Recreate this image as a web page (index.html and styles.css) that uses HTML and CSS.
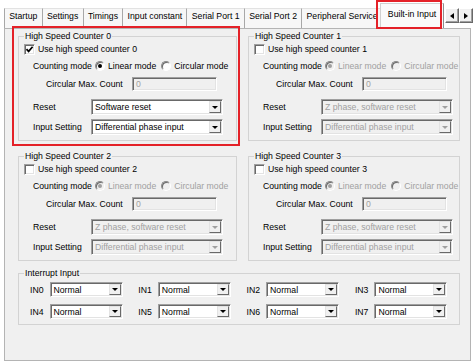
FILE: index.html
```html
<!DOCTYPE html>
<html>

<head>
	<meta charset="UTF-8">
	<title>Built-in Input</title>
	<link rel="stylesheet" href="styles.css">
</head>

<body>
	<div class="strip">
		<div class="tabs">
			<div class="tab">Startup</div>
			<div class="tab">Settings</div>
			<div class="tab">Timings</div>
			<div class="tab">Input constant</div>
			<div class="tab">Serial Port 1</div>
			<div class="tab">Serial Port 2</div>
			<div class="tab">Peripheral Service</div>
			<div class="tab active">Built-in Input</div>
			<div class="tab stub"></div>
		</div>
		<div class="spin">
			<span class="spinBtn"><i class="tri left"></i></span>
			<span class="spinBtn"><i class="tri right"></i></span>
		</div>
	</div>
	<div class="page">
		<div class="counters">
			<fieldset class="group">
				<legend>High Speed Counter 0</legend>
				<div class="row rowCheck">
					<span class="check"><svg width="9" height="9" viewBox="0 0 9 9"><path d="M1.5 4.2 L3.6 6.4 L7.6 1.8" fill="none" stroke="#000" stroke-width="1.7"/></svg></span>
					<span class="checkText">Use high speed counter 0</span>
				</div>
				<div class="row rowMode">
					<span class="modeLabel">Counting mode</span>
					<span class="radio on"></span><span class="radioText">Linear mode</span>
					<span class="radio second"></span><span class="radioText">Circular mode</span>
				</div>
				<div class="row rowMax">
					<span class="maxLabel">Circular Max. Count</span>
					<span class="textbox">0</span>
				</div>
				<div class="row rowCombo rowReset">
					<span class="comboLabel">Reset</span>
					<span class="combo"><span class="comboText">Software reset</span><span class="comboBtn"><i class="tri down"></i></span></span>
				</div>
				<div class="row rowCombo rowInput">
					<span class="comboLabel">Input Setting</span>
					<span class="combo"><span class="comboText">Differential phase input</span><span class="comboBtn"><i class="tri down"></i></span></span>
				</div>
			</fieldset>

			<fieldset class="group off">
				<legend>High Speed Counter 1</legend>
				<div class="row rowCheck">
					<span class="check"></span>
					<span class="checkText">Use high speed counter 1</span>
				</div>
				<div class="row rowMode">
					<span class="modeLabel">Counting mode</span>
					<span class="radio on"></span><span class="radioText">Linear mode</span>
					<span class="radio second"></span><span class="radioText">Circular mode</span>
				</div>
				<div class="row rowMax">
					<span class="maxLabel">Circular Max. Count</span>
					<span class="textbox">0</span>
				</div>
				<div class="row rowCombo rowReset">
					<span class="comboLabel">Reset</span>
					<span class="combo"><span class="comboText">Z phase, software reset</span><span class="comboBtn"><i class="tri down"></i></span></span>
				</div>
				<div class="row rowCombo rowInput">
					<span class="comboLabel">Input Setting</span>
					<span class="combo"><span class="comboText">Differential phase input</span><span class="comboBtn"><i class="tri down"></i></span></span>
				</div>
			</fieldset>

			<fieldset class="group off">
				<legend>High Speed Counter 2</legend>
				<div class="row rowCheck">
					<span class="check"></span>
					<span class="checkText">Use high speed counter 2</span>
				</div>
				<div class="row rowMode">
					<span class="modeLabel">Counting mode</span>
					<span class="radio on"></span><span class="radioText">Linear mode</span>
					<span class="radio second"></span><span class="radioText">Circular mode</span>
				</div>
				<div class="row rowMax">
					<span class="maxLabel">Circular Max. Count</span>
					<span class="textbox">0</span>
				</div>
				<div class="row rowCombo rowReset">
					<span class="comboLabel">Reset</span>
					<span class="combo"><span class="comboText">Z phase, software reset</span><span class="comboBtn"><i class="tri down"></i></span></span>
				</div>
				<div class="row rowCombo rowInput">
					<span class="comboLabel">Input Setting</span>
					<span class="combo"><span class="comboText">Differential phase input</span><span class="comboBtn"><i class="tri down"></i></span></span>
				</div>
			</fieldset>

			<fieldset class="group off">
				<legend>High Speed Counter 3</legend>
				<div class="row rowCheck">
					<span class="check"></span>
					<span class="checkText">Use high speed counter 3</span>
				</div>
				<div class="row rowMode">
					<span class="modeLabel">Counting mode</span>
					<span class="radio on"></span><span class="radioText">Linear mode</span>
					<span class="radio second"></span><span class="radioText">Circular mode</span>
				</div>
				<div class="row rowMax">
					<span class="maxLabel">Circular Max. Count</span>
					<span class="textbox">0</span>
				</div>
				<div class="row rowCombo rowReset">
					<span class="comboLabel">Reset</span>
					<span class="combo"><span class="comboText">Z phase, software reset</span><span class="comboBtn"><i class="tri down"></i></span></span>
				</div>
				<div class="row rowCombo rowInput">
					<span class="comboLabel">Input Setting</span>
					<span class="combo"><span class="comboText">Differential phase input</span><span class="comboBtn"><i class="tri down"></i></span></span>
				</div>
			</fieldset>
		</div>

		<fieldset class="group interrupt">
			<legend>Interrupt Input</legend>
			<div class="inGrid">
				<div class="inCell"><span class="inLabel">IN0</span><span class="combo small"><span class="comboText">Normal</span><span class="comboBtn"><i class="tri down"></i></span></span></div>
				<div class="inCell"><span class="inLabel">IN1</span><span class="combo small"><span class="comboText">Normal</span><span class="comboBtn"><i class="tri down"></i></span></span></div>
				<div class="inCell"><span class="inLabel">IN2</span><span class="combo small"><span class="comboText">Normal</span><span class="comboBtn"><i class="tri down"></i></span></span></div>
				<div class="inCell"><span class="inLabel">IN3</span><span class="combo small"><span class="comboText">Normal</span><span class="comboBtn"><i class="tri down"></i></span></span></div>
				<div class="inCell"><span class="inLabel">IN4</span><span class="combo small"><span class="comboText">Normal</span><span class="comboBtn"><i class="tri down"></i></span></span></div>
				<div class="inCell"><span class="inLabel">IN5</span><span class="combo small"><span class="comboText">Normal</span><span class="comboBtn"><i class="tri down"></i></span></span></div>
				<div class="inCell"><span class="inLabel">IN6</span><span class="combo small"><span class="comboText">Normal</span><span class="comboBtn"><i class="tri down"></i></span></span></div>
				<div class="inCell"><span class="inLabel">IN7</span><span class="combo small"><span class="comboText">Normal</span><span class="comboBtn"><i class="tri down"></i></span></span></div>
			</div>
		</fieldset>
	</div>

	<div class="mark markTab"></div>
	<div class="mark markGroup"></div>
</body>

</html>
```

FILE: styles.css
```css
* {
	box-sizing: border-box;
}
body {
	margin: 0;
	width: 474px;
	height: 363px;
	overflow: hidden;
	position: relative;
	background: #fff;
	color: #000;
	font-family: "Liberation Sans", Arial, sans-serif;
	font-size: 8.7px;
	line-height: 10px;
}

/* tab strip */
.strip {
	display: flex;
	height: 28px;
	padding: 0 1px 0 4px;
}
.tabs {
	flex: 1;
	min-width: 0;
	display: flex;
	align-items: flex-end;
	overflow: hidden;
}
.tab {
	flex: none;
	height: 20px;
	line-height: 15px;
	padding: 0 4.3px;
	margin-left: -1px;
	border: 1px solid #a8a8a8;
	border-top-color: #e2e2e2;
	border-bottom: none;
	background: #f7f7f7;
	white-space: nowrap;
}
.tab:first-child {
	margin-left: 0;
}
.tab.active {
	position: relative;
	z-index: 1;
	height: 25px;
	line-height: 20px;
	padding: 0 7px;
	margin-left: -3px;
	background: #fafafa;
	border-color: #d0d0d0 #8e8e8e #d0d0d0 #d0d0d0;
}
.tab.stub {
	width: 10px;
	margin-left: 3px;
}
.spin {
	display: flex;
	margin-top: 8px;
	height: 15px;
}
.spinBtn {
	width: 14px;
	height: 15px;
	display: flex;
	align-items: center;
	justify-content: center;
	background: #f0f0f0;
	border: 1px solid;
	border-color: #fff #696969 #696969 #fff;
	box-shadow: inset -1px -1px #a0a0a0;
}
.tri {
	display: block;
	width: 0;
	height: 0;
}
.tri.left {
	border-top: 3.5px solid transparent;
	border-bottom: 3.5px solid transparent;
	border-right: 4px solid #000;
}
.tri.right {
	border-top: 3.5px solid transparent;
	border-bottom: 3.5px solid transparent;
	border-left: 4px solid #000;
}
.tri.down {
	border-left: 3px solid transparent;
	border-right: 3px solid transparent;
	border-top: 3px solid #000;
}

/* page */
.page {
	height: 333px;
	margin: 0 3px 0 4px;
	padding: 2px 10px 0 13px;
	border: 1px solid #b4b4b4;
	background: #f0f0f0;
}
.counters {
	display: grid;
	grid-template-columns: 219px 212px;
	column-gap: 11px;
	row-gap: 10px;
}
.group {
	margin: 0;
	padding: 0 0 5px;
	min-width: 0;
	border: 1px solid #d3d3d3;
}
.group legend {
	margin-left: 5px;
	padding: 0 1px;
	line-height: 10px;
}
.row {
	display: flex;
	align-items: center;
	white-space: nowrap;
}
.rowCheck {
	margin-top: 1px;
	height: 14px;
	padding-left: 5px;
}
.rowMode {
	margin-top: 3px;
	height: 14px;
	padding-left: 14px;
}
.rowMax {
	margin-top: 4px;
	height: 14px;
	padding-left: 27px;
}
.rowReset {
	margin-top: 8px;
	height: 16px;
}
.rowInput {
	margin-top: 4px;
	height: 16px;
}
.rowCombo {
	padding-left: 14px;
}

.check {
	width: 11px;
	height: 11px;
	display: flex;
	align-items: center;
	justify-content: center;
	background: #fff;
	border: 1px solid;
	border-color: #a0a0a0 #fff #fff #a0a0a0;
	box-shadow: inset 1px 1px #696969, inset -1px -1px #e3e3e3;
}
.checkText {
	margin-left: 3px;
}
.radio {
	width: 10px;
	height: 10px;
	margin-left: 3px;
	display: flex;
	align-items: center;
	justify-content: center;
	border-radius: 50%;
	background: #fff;
	border: 1px solid;
	border-color: #8a8a8a #fff #fff #8a8a8a;
	box-shadow: inset 1px 1px #696969;
}
.radio.second {
	margin-left: 5px;
}
.radio.on::after {
	content: "";
	width: 4px;
	height: 4px;
	border-radius: 50%;
	background: #000;
}
.radioText {
	margin-left: 3px;
}
.maxLabel {
	width: 86px;
}
.comboLabel {
	width: 58px;
}

.textbox,
.combo {
	border: 1px solid;
	border-color: #a0a0a0 #fff #fff #a0a0a0;
	box-shadow: inset 1px 1px #696969, inset -1px -1px #e3e3e3;
}
.textbox {
	width: 85px;
	height: 14px;
	padding: 0 3px;
	line-height: 12px;
	background: #f0f0f0;
	color: #a0a0a0;
}
.combo {
	display: flex;
	width: 132px;
	height: 16px;
	padding: 1px;
	background: #fff;
}
.comboText {
	flex: 1;
	min-width: 0;
	padding-left: 2px;
	line-height: 12px;
	overflow: hidden;
	white-space: nowrap;
}
.comboBtn {
	flex: none;
	width: 12px;
	display: flex;
	align-items: center;
	justify-content: center;
	background: #f0f0f0;
	border: 1px solid;
	border-color: #e3e3e3 #696969 #696969 #e3e3e3;
}

/* disabled counters */
.off .radio {
	background: #f0f0f0;
}
.off .radio.on::after {
	background: #a0a0a0;
}
.off .radioText {
	color: #a0a0a0;
}
.off .combo {
	background: #f0f0f0;
	color: #a0a0a0;
}
.off .tri.down {
	border-top-color: #a0a0a0;
}

/* interrupt inputs */
.interrupt {
	margin-top: 7px;
	padding: 4px 0 5px 11px;
}
.interrupt legend {
	margin-left: -6px;
}
.inGrid {
	display: grid;
	grid-template-columns: repeat(4, 108.3px);
	row-gap: 7px;
}
.inCell {
	display: flex;
	align-items: center;
	height: 15px;
}
.inLabel {
	width: 19.5px;
}
.combo.small {
	width: 73px;
	height: 15px;
}

/* red call-outs */
.mark {
	position: absolute;
	z-index: 5;
	border: 2px solid #e42128;
	pointer-events: none;
}
.markTab {
	left: 376px;
	top: 0;
	width: 66px;
	height: 29px;
}
.markGroup {
	left: 12px;
	top: 26px;
	width: 228px;
	height: 120px;
}
```
